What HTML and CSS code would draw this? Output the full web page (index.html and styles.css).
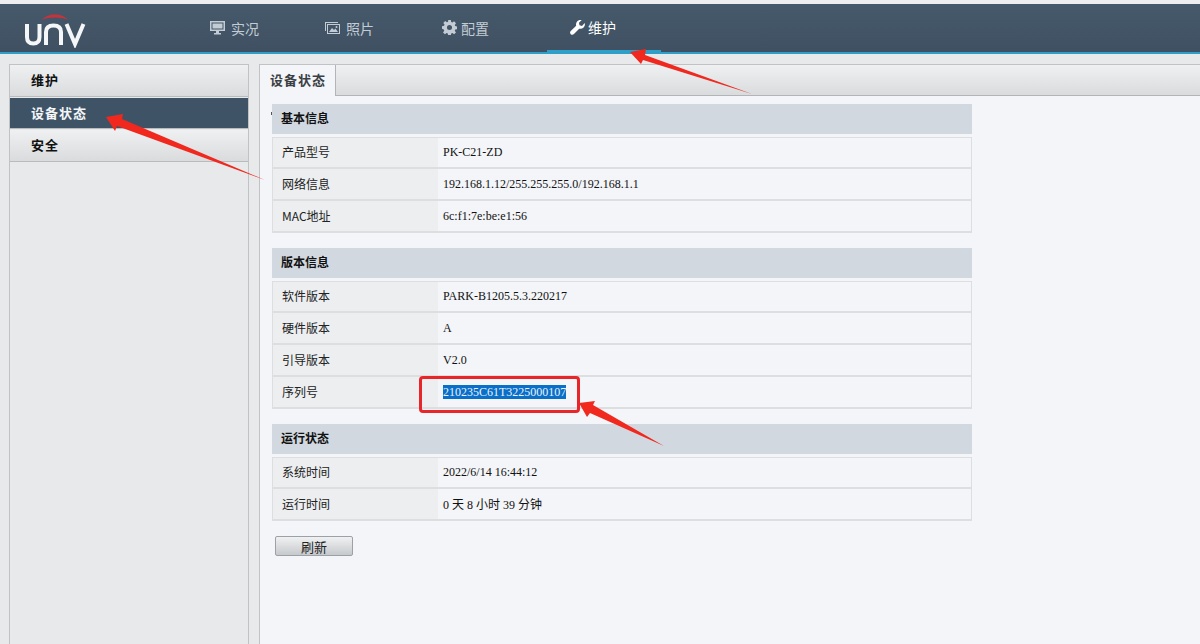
FILE: index.html
```html
<!DOCTYPE html>
<html lang="zh-CN">
<head>
<meta charset="utf-8">
<title>设备状态</title>
<link rel="stylesheet" href="styles.css">
</head>
<body>
<header class="topbar">
  <svg class="logo" width="62" height="34" viewBox="0 0 62 34" role="img" aria-label="UNV">
    <path class="logo-arc" d="M17 6C22 -1.500 38 -1.500 43 6C36 2.800 24 2.800 17 6Z"/>
    <path class="logo-u" d="M2 10V23C2 27.500 4.500 29.500 8.250 29.500C12 29.500 14.500 27.500 14.500 23V10"/>
    <path class="logo-u" d="M21 31V18C21 13 24 11.500 28.500 11.500C33 11.500 36 13 36 18V31"/>
    <path class="logo-v" d="M41.500 10L50 30L58.500 10"/>
  </svg>
  <nav class="nav">
    <a class="nav-item">
      <svg class="nav-icon" viewBox="0 0 15 15"><path d="M0 1h15v10H9v2h2v1.500H4V13h2v-2H0zM1.500 2.500v7h12v-7z" fill-rule="evenodd"/><rect x="2.500" y="3.500" width="10" height="5"/></svg>
      <span>实况</span>
    </a>
    <a class="nav-item">
      <svg class="nav-icon" viewBox="0 0 15 15"><path d="M0 2h13v1H1v8H0zM2 4h13v10H2zM3 5v8h11V5z" fill-rule="evenodd"/><path d="M4 12l3-4 2 2 1.500-1.500L13 12zM11.500 6a1 1 0 1 1 0 2 1 1 0 0 1 0-2z"/></svg>
      <span>照片</span>
    </a>
    <a class="nav-item">
      <svg class="nav-icon nav-icon-gear" viewBox="0 0 16 16"><path fill-rule="evenodd" d="M6.600 0h2.800l.4 2.200 1.300.5 1.800-1.300 2 2-1.300 1.800.5 1.300 2.200.4v2.800l-2.200.4-.5 1.300 1.300 1.800-2 2-1.800-1.300-1.300.5-.4 2.200H6.600l-.4-2.200-1.300-.5-1.800 1.300-2-2 1.300-1.800-.5-1.300L0 9.400V6.600l2.200-.4.500-1.300-1.300-1.800 2-2 1.800 1.300 1.300-.5zM8 5.300a2.700 2.700 0 1 0 0 5.400 2.700 2.700 0 0 0 0-5.400z"/></svg>
      <span>配置</span>
    </a>
    <a class="nav-item is-active">
      <svg class="nav-icon nav-icon-wrench" viewBox="0 0 16 16"><path d="M15.700 3.200c.5 1.700.1 3.500-1.200 4.800-1.300 1.300-3.100 1.700-4.700 1.200L4.200 15c-1 1-2.500 1-3.400.1-1-1-1-2.400 0-3.400l5.800-5.700C6.100 4.400 6.500 2.600 7.800 1.300 9.100 0 10.900-.4 12.500.1L9.600 3l.5 2.700 2.700.6z"/></svg>
      <span>维护</span>
    </a>
  </nav>
</header>

<div class="layout">
  <aside class="sidebar">
    <div class="side-item">维护</div>
    <div class="side-item is-current">设备状态</div>
    <div class="side-item">安全</div>
  </aside>

  <main class="content">
    <div class="tabs"><div class="tab">设备状态</div></div>

    <section class="group">
      <h2 class="group-title group-title-marked">基本信息</h2>
      <div class="info">
        <div class="row"><div class="label">产品型号</div><div class="value">PK-C21-ZD</div></div>
        <div class="row"><div class="label">网络信息</div><div class="value">192.168.1.12/255.255.255.0/192.168.1.1</div></div>
        <div class="row"><div class="label">MAC地址</div><div class="value">6c:f1:7e:be:e1:56</div></div>
      </div>
    </section>

    <section class="group">
      <h2 class="group-title">版本信息</h2>
      <div class="info">
        <div class="row"><div class="label">软件版本</div><div class="value">PARK-B1205.5.3.220217</div></div>
        <div class="row"><div class="label">硬件版本</div><div class="value">A</div></div>
        <div class="row"><div class="label">引导版本</div><div class="value">V2.0</div></div>
        <div class="row"><div class="label">序列号</div><div class="value"><span class="selected">210235C61T3225000107</span></div></div>
      </div>
    </section>

    <section class="group">
      <h2 class="group-title">运行状态</h2>
      <div class="info">
        <div class="row"><div class="label">系统时间</div><div class="value">2022/6/14 16:44:12</div></div>
        <div class="row"><div class="label">运行时间</div><div class="value">0 天 8 小时 39 分钟</div></div>
      </div>
    </section>

    <button class="refresh" type="button">刷新</button>
  </main>
</div>

<div class="callout-box"></div>
<svg class="arrows" width="1200" height="644" viewBox="0 0 1200 644" aria-hidden="true">
  <polygon points="630,52 646,49 645,55 752,94 643,60 641,64"/>
  <polygon points="106,117 123,114 122,119 265,180 117,126 115,131"/>
  <polygon points="579,403 595,401 593,405 664,446 590,413 587,417"/>
</svg>
</body>
</html>
```

FILE: styles.css
```css
* { box-sizing: border-box; }

html, body { height: 100%; }

body {
  margin: 0;
  height: 644px;
  overflow: hidden;
  display: flex;
  flex-direction: column;
  background: #e8e9eb;
  border-top: 4px solid #eeeeee;
  font: 12px "Liberation Serif", "Noto Sans CJK SC", serif;
  color: #1a1a1a;
}

.topbar {
  height: 50px;
  flex: none;
  display: flex;
  background: linear-gradient(#465a6b, #3f5062);
  border-bottom: 2px solid #2f9fc8;
}

.logo { margin: 10px 0 0 25px; flex: none; width: 62px; height: 34px; }
.logo-arc { fill: #c8323c; }
.logo-u, .logo-v { fill: none; stroke: #f4f6f8; stroke-width: 4; }

.nav {
  margin-left: 100px;
  display: grid;
  grid-template-columns: 115px 117px 128px 114px;
}

.nav-item {
  display: flex;
  align-items: center;
  gap: 6px;
  height: 48px;
  padding: 0 0 1px 23px;
  color: #c3ccd4;
  font: 14px "Noto Sans CJK SC", sans-serif;
}

.nav-item.is-active {
  color: #ffffff;
  padding-bottom: 1px;
  border-bottom: 2px solid #2f9fc8;
  gap: 3px;
}

.nav-icon { width: 15px; height: 15px; fill: currentColor; flex: none; }
.nav-icon-gear { margin-right: -2px; }
.nav-icon-wrench { margin-top: 2px; }

.layout { flex: 1; min-height: 0; display: flex; padding: 10px 0 0 9px; gap: 10px; }

.sidebar {
  width: 240px;
  flex: none;
  border: 1px solid #c0c2c4;
  border-bottom: 0;
  background: #e8e9eb;
}

.side-item {
  height: 32px;
  padding: 0 0 2px 21px;
  display: flex;
  align-items: center;
  letter-spacing: 1px;
  font: bold 13px/1 "Noto Sans CJK SC", sans-serif;
  color: #111;
  background: linear-gradient(#eef0f1, #d9dbdd);
  border-bottom: 1px solid #b9bcbe;
}

.side-item.is-current {
  height: 31px;
  margin-top: 1px;
  color: #f4f6f8;
  background: #3f5367;
  border-bottom: 1px solid #b9bcbe;
}

.side-item.is-current + .side-item { margin-top: 1px; }

.content {
  flex: 1;
  min-width: 0;
  background: #f3f5f8;
  border: 1px solid #c0c2c4;
  border-width: 1px 0 0 1px;
}

.tabs {
  height: 31px;
  background: linear-gradient(#eef0f1, #d9dbdd);
  border-bottom: 1px solid #b2b5b7;
}

.tab {
  width: 76px;
  height: 31px;
  padding: 0 0 2px 10px;
  display: flex;
  align-items: center;
  background: #f3f5f8;
  border-right: 1px solid #b2b5b7;
  font: bold 13px/1 "Noto Sans CJK SC", sans-serif;
  letter-spacing: 1px;
  color: #3a3f44;
}

.group { width: 700px; margin: 8px 0 15px 12px; }
.group + .group { margin-top: 0; }

.group-title {
  height: 30px;
  margin: 0 0 3px;
  padding: 0 0 2px 9px;
  display: flex;
  align-items: center;
  background: #d2d8e0;
  font: bold 12px/1 "Noto Sans CJK SC", sans-serif;
  color: #111;
}

.group-title-marked { position: relative; }

.group-title-marked::before {
  content: "";
  position: absolute;
  left: -1px;
  top: 8px;
  width: 1px;
  height: 3px;
  background: #555;
}

.info { border: 1px solid #dcdee0; border-width: 1px 1px 0; }

.row {
  height: 32px;
  display: flex;
  border-bottom: 2px solid #dcdee0;
}

.row:first-child { height: 31px; }

.label {
  width: 165px;
  padding: 0 0 2px 9px;
  display: flex;
  align-items: center;
  background: #eceef0;
  font: 12px "Noto Sans CJK SC", sans-serif;
  color: #222;
}

.value {
  flex: 1;
  padding-left: 5px;
  display: flex;
  align-items: center;
  font: 12px "Liberation Serif", "Noto Sans CJK SC", serif;
  color: #111;
}

.selected { background: #0a6fc8; color: #e8f2fb; line-height: 14px; }

.refresh {
  display: block;
  width: 78px;
  height: 20px;
  margin: 1px 0 0 15px;
  padding: 0;
  border: 1px solid #9da1a5;
  border-radius: 2px;
  background: linear-gradient(#f0f1f2, #c6c9cc);
  font: 13px/1 "Noto Sans CJK SC", sans-serif;
  color: #222;
}

.callout-box {
  position: absolute;
  left: 419px;
  top: 376px;
  width: 161px;
  height: 37px;
  border: 3px solid #e8262a;
  border-radius: 4px;
}

.arrows { position: absolute; left: 0; top: 0; pointer-events: none; }
.arrows polygon { fill: #f0281e; }
```
